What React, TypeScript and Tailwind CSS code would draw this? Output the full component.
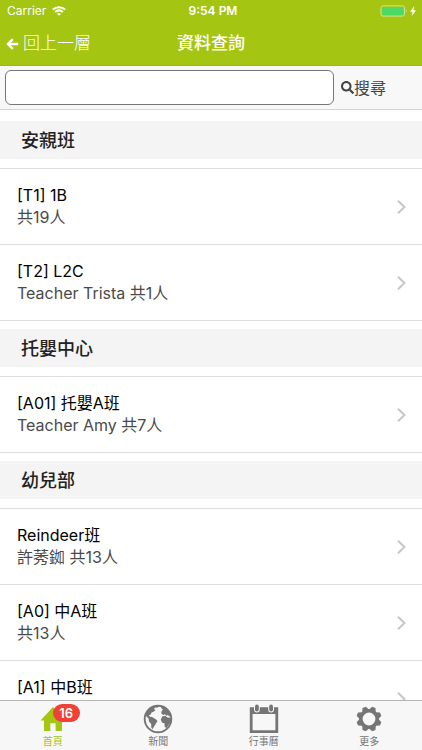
import React, { useState } from "react"
import { FaSearch } from "react-icons/fa"

type ClassItem = { name: string; detail?: string }
type Section = { title: string; items: ClassItem[] }

const sections: Section[] = [
  {
    title: "安親班",
    items: [
      { name: "[T1] 1B", detail: "共19人" },
      { name: "[T2] L2C", detail: "Teacher Trista 共1人" },
    ],
  },
  {
    title: "托嬰中心",
    items: [{ name: "[A01] 托嬰A班", detail: "Teacher Amy 共7人" }],
  },
  {
    title: "幼兒部",
    items: [
      { name: "Reindeer班", detail: "許莠銣 共13人" },
      { name: "[A0] 中A班", detail: "共13人" },
      { name: "[A1] 中B班" },
    ],
  },
]

function StatusBar() {
  return (
    <div className="relative flex h-[22px] items-center justify-between pr-1 pl-[7px] text-[12px]">
      <div className="flex items-center gap-1.5">
        <span>Carrier</span>
        <svg viewBox="0 0 14 10" className="h-[10px] w-[14px]" fill="none" stroke="currentColor" strokeWidth="2">
          <path d="M0.8 3.6C4.4 0.4 9.6 0.4 13.2 3.6" />
          <path d="M3.1 6.1C5.4 4.1 8.6 4.1 10.9 6.1" />
          <path d="M7 9.8L4.9 7.7C6.1 6.8 7.9 6.8 9.1 7.7Z" fill="currentColor" stroke="none" />
        </svg>
      </div>
      <span className="absolute inset-x-0 pl-1 text-center font-semibold">9:54 PM</span>
      <svg viewBox="0 0 38 12" className="h-[12px] w-[38px]">
        <rect x="1" y="0.9" width="23.5" height="10.2" rx="2" fill="none" stroke="#d6e38f" />
        <rect x="2.2" y="2.1" width="21.1" height="7.8" rx="1" fill="#4cd964" />
        <path d="M25.8 4.2C27 4.8 27 7.2 25.8 7.8Z" fill="#d6e38f" />
        <path d="M34.3 1L30 6.7H32.6L31.8 11L36 5.2H33.4Z" fill="#fff" />
      </svg>
    </div>
  )
}

function Row({ item }: { item: ClassItem }) {
  return (
    <li className="border-b border-[#dddddd]">
      <a href="#" className="flex h-[75px] items-center justify-between pr-4 pl-[17px]">
        <span className="self-start pt-[15px] text-[16px] leading-[22px]">
          <span className="block text-black">{item.name}</span>
          {item.detail && <span className="block text-[#4a4a4a]">{item.detail}</span>}
        </span>
        <svg viewBox="0 0 9 14" className="h-[14px] w-[9px]" fill="none" stroke="#c7c7c7" strokeWidth="2">
          <path d="M1 0.8L7.4 7L1 13.2" />
        </svg>
      </a>
    </li>
  )
}

function HomeIcon() {
  return (
    <svg viewBox="0 0 26 26" className="h-[26px] w-[26px]" fill="currentColor">
      <path d="M13 1L0.5 14.5H4V25H10.3V17.3H15.6V25H22V14.5H25.5L21 9.5V2.5H18V6.3Z" />
    </svg>
  )
}

function EarthIcon() {
  return (
    <svg viewBox="0 0 30 30" className="h-[30px] w-[30px]" fill="currentColor">
      <circle cx="15" cy="15" r="13.3" fill="none" stroke="currentColor" strokeWidth="1.9" />
      <path d="M2.5 10.5C4 5.5 8 2 13.3 1.5L16 2.6L14.3 3.8L12.2 3.6L10.8 5.1L12.6 5.9L10.9 7.6L8.6 8.6L7.6 10.6L6 11.2L6.8 12.8L9 13L12.8 15.2L14.5 17L12.8 19.7L11.3 22.3L9.4 25.3L8.2 23.2V19.9L6 17.4L5.6 14.4L3.4 12.4Z" />
      <path d="M18.3 8L19.9 5.6L18.6 4.4L17.6 2.4L21 2.4C24.9 4.2 27.4 7.6 28.2 11.5L26.5 12.6L24.9 11.1L23.2 11.7L22 10.2L20.2 11L18.6 9.8Z" />
      <path d="M19.4 12.3L22.6 11.9L24.5 13.4L28 13.8L27.6 18.3L25.4 21.2L23.3 24.2L21.6 22.6L21.6 19.4L18.9 18.5L17.8 15.6Z" />
    </svg>
  )
}

function CalendarIcon() {
  return (
    <svg viewBox="0 0 30 30" className="h-[30px] w-[30px]" fill="currentColor">
      <path fillRule="evenodd" d="M0.8 3.2H29.2V29H0.8ZM3.6 10V26.3H26.4V10Z" />
      <rect x="5" y="0" width="5.8" height="8.4" rx="2.9" fill="#f7f7f7" />
      <rect x="19.2" y="0" width="5.8" height="8.4" rx="2.9" fill="#f7f7f7" />
      <rect x="6" y="0.6" width="3.8" height="6.8" rx="1.9" />
      <rect x="20.2" y="0.6" width="3.8" height="6.8" rx="1.9" />
    </svg>
  )
}

function GearIcon() {
  return (
    <svg viewBox="-13 -13 26 26" className="h-[26px] w-[26px]" fill="currentColor">
      <circle r="8.1" fill="none" stroke="currentColor" strokeWidth="3.4" />
      {[22.5, 67.5, 112.5, 157.5, 202.5, 247.5, 292.5, 337.5].map((angle) => (
        <path key={angle} d="M-3.8 -8.5L-1.8 -12.6H1.8L3.8 -8.5Z" transform={`rotate(${angle})`} />
      ))}
    </svg>
  )
}

const tabs = [
  { label: "首頁", icon: <HomeIcon />, badge: 16 },
  { label: "新聞", icon: <EarthIcon /> },
  { label: "行事曆", icon: <CalendarIcon /> },
  { label: "更多", icon: <GearIcon /> },
]

export default function App() {
  const [keyword, setKeyword] = useState("")
  const [activeTab, setActiveTab] = useState(0)

  return (
    <div className="flex h-screen flex-col bg-white font-[Inter,'Noto_Sans_CJK_TC',sans-serif]">
      {/* --- Header --- */}
      <header className="border-b border-[#9bb32d] bg-[#a4c511] text-white">
        <StatusBar />
        <div className="relative flex h-[43px] items-center justify-center">
          <button type="button" className="absolute left-[6px] flex items-center gap-1 text-[17px] font-light">
            <svg
              viewBox="0 0 13 12"
              className="h-[12px] w-[13px]"
              fill="none"
              stroke="currentColor"
              strokeWidth="2.4"
              strokeLinejoin="round"
            >
              <path d="M6.8 1.2L1.8 6L6.8 10.8M2 6H12.2" />
            </svg>
            回上一層
          </button>
          <h1 className="text-[17px] font-medium">資料查詢</h1>
        </div>
      </header>

      {/* --- Search --- */}
      <form
        onSubmit={(e) => e.preventDefault()}
        className="flex h-[44px] shrink-0 items-center gap-[7px] border-b border-[#d4d4d4] bg-[#f8f8f8] pr-9 pl-[5px]"
      >
        <input
          type="text"
          aria-label="搜尋"
          value={keyword}
          onChange={(e) => setKeyword(e.target.value)}
          className="h-[35px] min-w-0 flex-1 rounded-md border border-[#777777] bg-white px-2 text-[16px] outline-none"
        />
        <button type="submit" className="flex items-center text-[16px] text-[#444444]">
          <FaSearch className="h-[13px] w-[13px]" />
          搜尋
        </button>
      </form>

      {/* --- Class list --- */}
      <main className="min-h-0 flex-1 overflow-y-auto pt-[3px] [scrollbar-width:none]">
        {sections.map((section) => (
          <section key={section.title} className="pt-2">
            <h2 className="mb-[9px] flex h-[38px] items-center bg-[#f4f4f4] pl-[21px] text-[18px] font-medium text-[#222222]">
              {section.title}
            </h2>
            <ul className="border-t border-[#dddddd]">
              {section.items.map((item) => (
                <Row key={item.name} item={item} />
              ))}
            </ul>
          </section>
        ))}
      </main>

      {/* --- Tab bar --- */}
      <nav className="grid h-[50px] shrink-0 grid-cols-4 border-t border-[#b5b5b5] bg-[#f7f7f7]">
        {tabs.map((tab, index) => (
          <button
            key={tab.label}
            type="button"
            onClick={() => setActiveTab(index)}
            className={`flex flex-col items-center pt-[2px] text-[10px] leading-[14px] ${
              activeTab === index ? "text-[#a4c511]" : "text-[#757575]"
            }`}
          >
            <span className="relative flex h-[31px] items-center">
              {tab.icon}
              {tab.badge && (
                <span className="absolute top-[1px] left-[13px] flex h-[18px] w-[27px] items-center justify-center rounded-full bg-[#ef4136] text-[13px] font-semibold text-white">
                  {tab.badge}
                </span>
              )}
            </span>
            {tab.label}
          </button>
        ))}
      </nav>
    </div>
  )
}
